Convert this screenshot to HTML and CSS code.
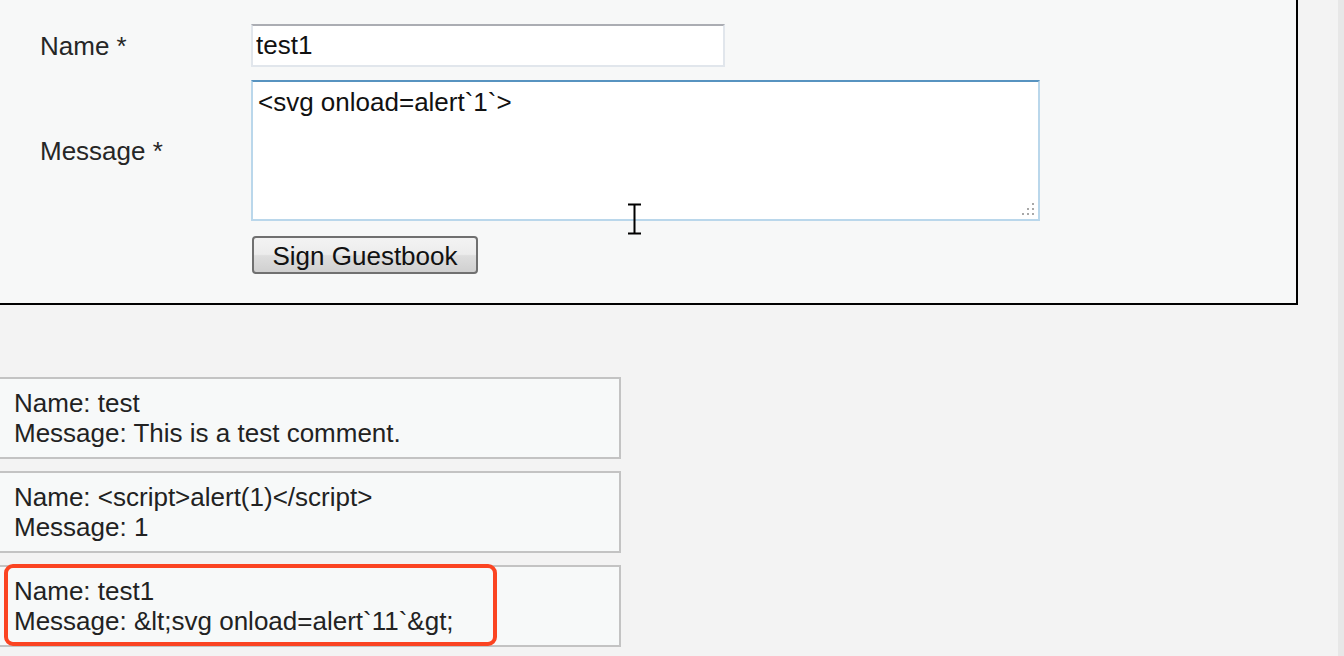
FILE: index.html
```html
<!DOCTYPE html>
<html>
<head>
<meta charset="utf-8">
<title>Guestbook</title>
<link rel="stylesheet" href="styles.css">
</head>
<body>
<div class="page">
  <div class="main">
    <form class="guestbook-form">
      <div class="form-grid">
        <label class="field-label" for="txtName">Name *</label>
        <input class="text-input" id="txtName" type="text" value="test1">
        <label class="field-label" for="mtxMessage">Message *</label>
        <div class="textarea-wrap">
          <textarea class="message-input" id="mtxMessage">&lt;svg onload=alert`1`&gt;</textarea>
          <svg class="grip" width="14" height="14" viewBox="0 0 14 14" aria-hidden="true">
            <g fill="#a8a8a8">
              <rect x="11" y="1" width="2" height="2"/>
              <rect x="6" y="6" width="2" height="2"/>
              <rect x="11" y="6" width="2" height="2"/>
              <rect x="1" y="11" width="2" height="2"/>
              <rect x="6" y="11" width="2" height="2"/>
              <rect x="11" y="11" width="2" height="2"/>
            </g>
          </svg>
        </div>
        <span class="spacer"></span>
        <div><button class="sign-button" type="button">Sign Guestbook</button></div>
      </div>
      <svg class="ibeam" width="16" height="34" viewBox="0 0 16 34" aria-hidden="true">
        <path d="M1 1.5H14M7.5 1.5V30.5M1 30.5H14" stroke="#000" stroke-width="2" fill="none"/>
      </svg>
    </form>

    <div class="comments">
      <div class="comment">Name: test<br>Message: This is a test comment.</div>
      <div class="comment">Name: &lt;script&gt;alert(1)&lt;/script&gt;<br>Message: 1</div>
      <div class="comment highlighted">Name: test1<br>Message: &amp;lt;svg onload=alert`11`&amp;gt;<span class="highlight-ring"></span></div>
    </div>
  </div>
  <div class="scroll-strip"></div>
</div>
</body>
</html>
```

FILE: styles.css
```css
html, body {
  margin: 0;
  padding: 0;
}

body {
  background: #f3f3f3;
  font-family: "Liberation Sans", Arial, sans-serif;
  font-size: 26px;
  color: #222;
  overflow: hidden;
}

.page {
  display: flex;
  height: 656px;
  overflow: hidden;
}

.main {
  flex: 1;
  min-width: 0;
}

.scroll-strip {
  width: 6px;
  background: #e7e7e7;
}

.guestbook-form {
  position: relative;
  margin: -10px 40px 0 -20px;
  border: 2px solid #000;
  background: #f7f8f8;
  padding: 32px 0 29px 58px;
}

.form-grid {
  display: grid;
  grid-template-columns: 211px 1fr;
  row-gap: 13px;
  align-items: center;
}

.field-label {
  line-height: 30px;
  color: #262626;
}

.text-input {
  box-sizing: border-box;
  width: 474px;
  height: 43px;
  margin: 0;
  padding: 0 3px;
  border: 2px solid #e1e6ec;
  border-top-color: #abadb3;
  background: #fff;
  font-family: "Liberation Sans", Arial, sans-serif;
  font-size: 26px;
  color: #111;
  outline: none;
}

.textarea-wrap {
  position: relative;
  width: 789px;
}

.message-input {
  box-sizing: border-box;
  display: block;
  width: 789px;
  height: 141px;
  margin: 0;
  padding: 5px 5px;
  border: 2px solid #bad7eb;
  border-top-color: #5793c0;
  background: #fff;
  font-family: "Liberation Sans", Arial, sans-serif;
  font-size: 26px;
  line-height: 30px;
  color: #111;
  outline: none;
  resize: none;
}

.grip {
  position: absolute;
  right: 5px;
  bottom: 5px;
}

.sign-button {
  box-sizing: border-box;
  width: 226px;
  height: 38px;
  margin: 2px 0 0 1px;
  padding: 3px 0 0;
  border: 2px solid #707070;
  border-radius: 4px;
  background: linear-gradient(#f3f3f3 0%, #ececec 48%, #dedede 52%, #d0d0d0 100%);
  font-family: "Liberation Sans", Arial, sans-serif;
  font-size: 26px;
  color: #111;
  display: block;
}

.ibeam {
  position: absolute;
  left: 645px;
  top: 211px;
}

.comments {
  margin: 72px 0 0 -4px;
  display: flex;
  flex-direction: column;
  gap: 12px;
}

.comment {
  position: relative;
  width: 625px;
  box-sizing: border-box;
  border: 2px solid #c3c3c3;
  background: #f7f9f9;
  padding: 9px 16px;
  line-height: 30px;
  color: #222;
}

.highlight-ring {
  position: absolute;
  left: 6px;
  top: -3px;
  width: 493px;
  height: 82px;
  box-sizing: border-box;
  border: 4px solid #fb4422;
  border-radius: 9px;
}
```
